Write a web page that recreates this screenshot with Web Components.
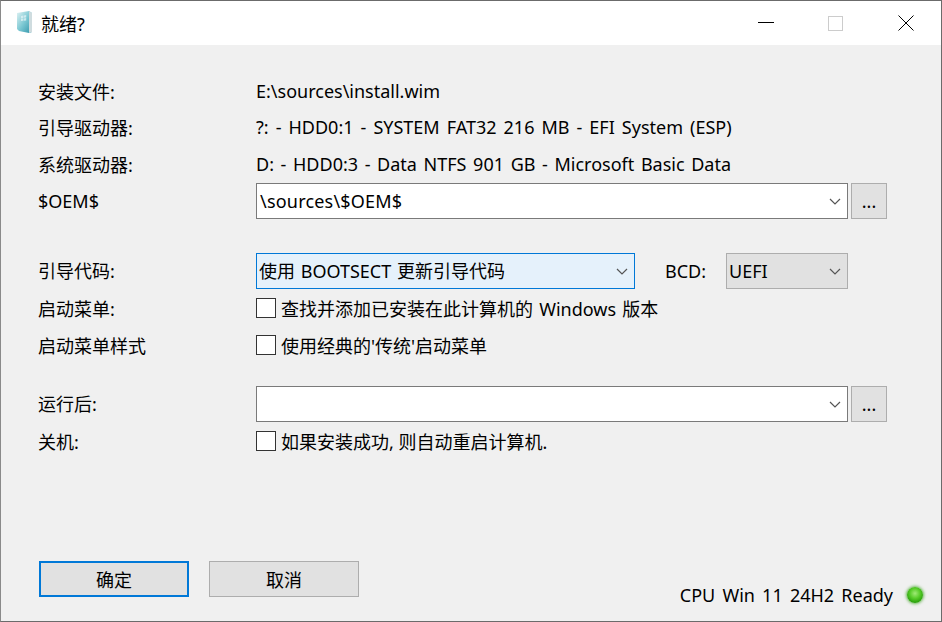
<!DOCTYPE html>
<html lang="zh">
<head>
<meta charset="utf-8">
<title>就绪?</title>
<style>
    html, body { margin: 0; padding: 0; background: #f0f0f0; }
    body { font-family: "Noto Sans", "Noto Sans CJK SC", sans-serif; font-size: 18px; color: #000; }
</style>
</head>
<body>
<setup-dialog></setup-dialog>
<script>
const CHEVRON = `<svg width="12" height="7" viewBox="0 0 12 7"><path d="M1 1l5 5 5-5" fill="none" stroke="#555" stroke-width="1.2"/></svg>`;

class TitleBar extends HTMLElement
{
    constructor()
    {
        super();
        this.attachShadow({mode: "open"}).innerHTML = `
            <style>
                :host { display: flex; align-items: center; height: 44px; background: #fff; padding-left: 15px; flex: none; }
                .title { margin-left: 7px; font-size: 18px; }
                .logo { margin-top: -2px; }
                .buttons { margin-left: auto; display: flex; align-items: center; }
                .buttons svg { display: block; margin-right: 27px; }
                .buttons svg:nth-child(1) { margin-right: 54px; }
                .buttons svg:nth-child(2) { margin-right: 55px; }
            </style>
            <svg class="logo" width="18" height="24" viewBox="0 0 18 24">
                <defs><linearGradient id="g" x1="0" y1="0" x2="1" y2="1">
                    <stop offset="0" stop-color="#e2f3f4"/><stop offset=".5" stop-color="#7cc8d3"/><stop offset="1" stop-color="#2f93a8"/>
                </linearGradient></defs>
                <path d="M1 3l12-2 3 2v19l-3 1-10-2-2-2z" fill="url(#g)"/>
                <path d="M13 1l3 2v19l-3 1z" fill="#cfdcdf"/>
                <path d="M5 6l2.3-.4v2.3L5 8.300zM7.800 5.500l2.400-.4v2.400l-2.400.3zM5 8.800l2.300-.3v2.300L5 11.100zM7.800 8.400l2.400-.3v2.400l-2.400.3z" fill="#e4f3f5" opacity=".75"/>
            </svg>
            <span class="title"><slot></slot></span>
            <div class="buttons">
                <svg width="16" height="2" viewBox="0 0 16 2"><rect width="16" height="1" y="0" fill="#000"/></svg>
                <svg width="15" height="15" viewBox="0 0 15 15"><rect x=".5" y=".5" width="14" height="14" fill="none" stroke="#ccc"/></svg>
                <svg width="16" height="16" viewBox="0 0 16 16"><path d="M.5.5l15 15M15.5.5l-15 15" stroke="#000" stroke-width="1" fill="none"/></svg>
            </div>
        `;
    }
}
customElements.define("title-bar", TitleBar);

class FormRow extends HTMLElement
{
    constructor()
    {
        super();
        this.attachShadow({mode: "open"}).innerHTML = `
            <style>
                :host { display: flex; align-items: center; height: 36px; }
                :host([raised]) .label { padding-bottom: 2px; }
                .label { width: 218px; flex: none; }
                .field { flex: 1; display: flex; align-items: center; min-width: 0; white-space: nowrap; }
            </style>
            <div class="label"><slot name="label"></slot></div>
            <div class="field"><slot></slot></div>
        `;
    }
}
customElements.define("form-row", FormRow);

class ComboBox extends HTMLElement
{
    constructor()
    {
        super();
        this.attachShadow({mode: "open"}).innerHTML = `
            <style>
                :host { display: flex; align-items: center; box-sizing: border-box; height: 36px; width: var(--w, 592px); flex: none;
                        border: 1px solid #7a7a7a; background: #fff; padding: 0 6px 0 3px; }
                :host([focused]) { background: #e5f1fb; border-color: #0078d7; padding-left: 2px; word-spacing: 1px; }
                :host([focused]) .text { padding-bottom: 2px; }
                :host([disabled]) { background: #e1e1e1; border-color: #adadad; padding-left: 2px; }
                .text { flex: 1; white-space: nowrap; }
                svg { display: block; }
            </style>
            <span class="text"><slot></slot></span>
            ${CHEVRON}
        `;
    }
}
customElements.define("combo-box", ComboBox);

class PushButton extends HTMLElement
{
    constructor()
    {
        super();
        this.attachShadow({mode: "open"}).innerHTML = `
            <style>
                :host { display: flex; align-items: center; justify-content: center; box-sizing: border-box; height: 36px; width: var(--w, 150px); flex: none;
                        background: #e1e1e1; border: 1px solid #adadad; }
                :host([primary]) { border: 2px solid #0078d7; }
            </style>
            <slot></slot>
        `;
    }
}
customElements.define("push-button", PushButton);

class CheckBox extends HTMLElement
{
    constructor()
    {
        super();
        this.attachShadow({mode: "open"}).innerHTML = `
            <style>
                :host { display: flex; align-items: center; gap: 5px; white-space: nowrap; }
                .box { box-sizing: border-box; width: 20px; height: 20px; background: #fff; border: 1px solid #333; flex: none; }
            </style>
            <div class="box"></div>
            <span><slot></slot></span>
        `;
    }
}
customElements.define("check-box", CheckBox);

class StatusLed extends HTMLElement
{
    constructor()
    {
        super();
        this.attachShadow({mode: "open"}).innerHTML = `
            <style>
                :host { display: flex; align-items: center; gap: 13px; white-space: nowrap; word-spacing: 2.5px; }
                .led { width: 16px; height: 16px; margin: 0 1px; border-radius: 50%; flex: none;
                       background: radial-gradient(circle at 50% 40%, #9fea76 0, #58cc2a 40%, #2ea50e 70%, #178a05 100%);
                       box-shadow: 0 0 3px 1px rgba(50, 160, 20, .7); }
            </style>
            <span><slot></slot></span>
            <div class="led"></div>
        `;
    }
}
customElements.define("status-led", StatusLed);

class SetupDialog extends HTMLElement
{
    constructor()
    {
        super();
        this.attachShadow({mode: "open"}).innerHTML = `
            <style>
                :host { display: flex; flex-direction: column; box-sizing: border-box; width: 942px; height: 622px;
                        background: #f0f0f0; border: 1px solid #6b6b6b; border-left-color: #8a8a8a; }
                main { flex: 1; display: flex; flex-direction: column; padding: 28px 53px 0 37px; }
                .more { --w: 36px; margin-left: 3px; }
                .boot { word-spacing: 2.35px; }
                .sys { word-spacing: 1.95px; margin-top: 1px; }
                .oem { letter-spacing: .2px; }
                .bcd { margin: 0 20px 0 30px; }
                .win { word-spacing: 1.5px; padding-bottom: 2px; }
                footer { display: flex; align-items: center; margin-top: auto; padding: 0 17px 14px 38px; }
                footer push-button + push-button { margin-left: 20px; }
                status-led { margin-left: auto; margin-top: 33px; }
            </style>
            <title-bar>就绪?</title-bar>
            <main>
                <form-row><span slot="label">安装文件:</span>E:\\sources\\install.wim</form-row>
                <form-row class="boot"><span slot="label">引导驱动器:</span>?: - HDD0:1 - SYSTEM FAT32 216 MB - EFI System (ESP)</form-row>
                <form-row class="sys"><span slot="label">系统驱动器:</span>D: - HDD0:3 - Data NTFS 901 GB - Microsoft Basic Data</form-row>
                <form-row style="margin-top:1px">
                    <span slot="label">$OEM$</span>
                    <combo-box class="oem">\\sources\\$OEM$</combo-box>
                    <push-button class="more">...</push-button>
                </form-row>
                <form-row raised style="margin-top:34px">
                    <span slot="label">引导代码:</span>
                    <combo-box focused style="--w:379px">使用 BOOTSECT 更新引导代码</combo-box>
                    <span class="bcd">BCD:</span>
                    <combo-box disabled style="--w:122px">UEFI</combo-box>
                </form-row>
                <form-row raised style="margin-top:2px"><span slot="label">启动菜单:</span><check-box class="win">查找并添加已安装在此计算机的 Windows 版本</check-box></form-row>
                <form-row><span slot="label">启动菜单样式</span><check-box>使用经典的'传统'启动菜单</check-box></form-row>
                <form-row raised style="margin-top:23px">
                    <span slot="label">运行后:</span>
                    <combo-box></combo-box>
                    <push-button class="more">...</push-button>
                </form-row>
                <form-row style="margin-top:1px"><span slot="label">关机:</span><check-box>如果安装成功, 则自动重启计算机.</check-box></form-row>
            </main>
            <footer>
                <push-button primary>确定</push-button>
                <push-button>取消</push-button>
                <status-led>CPU Win 11 24H2 Ready</status-led>
            </footer>
        `;
    }
}
customElements.define("setup-dialog", SetupDialog);
</script>
</body>
</html>
